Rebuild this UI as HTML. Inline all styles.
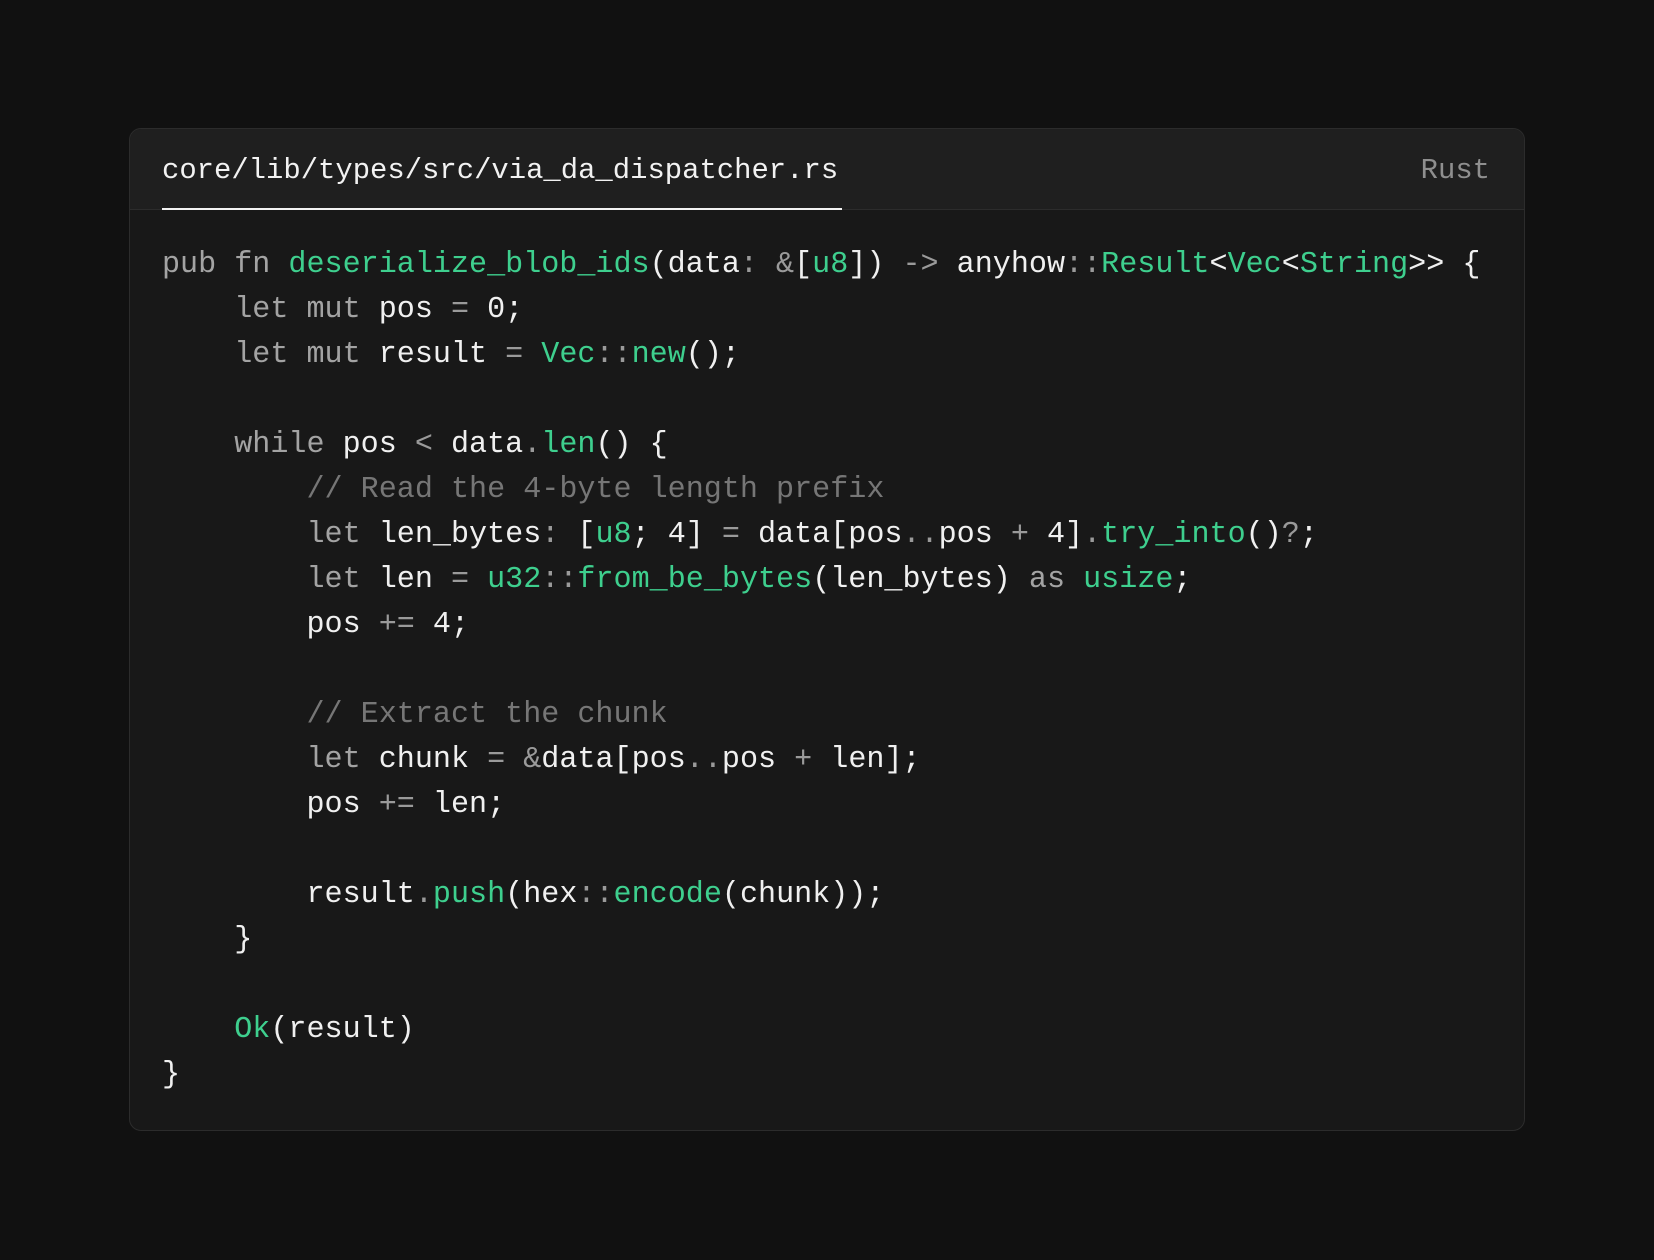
<!DOCTYPE html>
<html><head><meta charset="utf-8"><style>
html,body{margin:0;padding:0;background:#111111;width:1654px;height:1260px;overflow:hidden}
.card{position:absolute;left:129px;top:128px;width:1394px;height:1001px;background:#181818;border:1px solid #2c2c2c;border-radius:12px;overflow:hidden}
.hdr{height:80px;background:#1f1f1f;border-bottom:1px solid #2c2c2c;position:relative;font-family:"Liberation Mono",monospace;font-size:28.9px}
.title{position:absolute;left:32px;top:22px;color:#f2f2f2;line-height:40px;padding-bottom:0}
.ul{position:absolute;left:32px;width:680px;bottom:-1px;height:2px;background:#f2f2f2}
.lang{position:absolute;right:34px;top:22px;line-height:40px;color:#8f8f8f}
pre{margin:0;position:absolute;left:32px;top:114px;font-family:"Liberation Mono",monospace;font-size:30.1px;line-height:45px;color:#f0f0f0}
.k{color:#a3a3a3}.g{color:#3ecf8e}.p{color:#9a9a9a}.c{color:#767676}
</style></head><body>
<div class="card">
<div class="hdr"><span class="title">core/lib/types/src/via_da_dispatcher.rs</span><div class="ul"></div><span class="lang">Rust</span></div>
<pre><span class="k">pub fn</span> <span class="g">deserialize_blob_ids</span>(data<span class="p">:</span> <span class="p">&amp;</span>[<span class="g">u8</span>]) <span class="p">-&gt;</span> anyhow<span class="p">::</span><span class="g">Result</span>&lt;<span class="g">Vec</span>&lt;<span class="g">String</span>&gt;&gt; {
    <span class="k">let mut</span> pos <span class="p">=</span> 0;
    <span class="k">let mut</span> result <span class="p">=</span> <span class="g">Vec</span><span class="p">::</span><span class="g">new</span>();

    <span class="k">while</span> pos <span class="p">&lt;</span> data<span class="p">.</span><span class="g">len</span>() {
        <span class="c">// Read the 4-byte length prefix</span>
        <span class="k">let</span> len_bytes<span class="p">:</span> [<span class="g">u8</span>; 4] <span class="p">=</span> data[pos<span class="p">..</span>pos <span class="p">+</span> 4]<span class="p">.</span><span class="g">try_into</span>()<span class="p">?</span>;
        <span class="k">let</span> len <span class="p">=</span> <span class="g">u32</span><span class="p">::</span><span class="g">from_be_bytes</span>(len_bytes) <span class="k">as</span> <span class="g">usize</span>;
        pos <span class="p">+=</span> 4;

        <span class="c">// Extract the chunk</span>
        <span class="k">let</span> chunk <span class="p">=</span> <span class="p">&amp;</span>data[pos<span class="p">..</span>pos <span class="p">+</span> len];
        pos <span class="p">+=</span> len;

        result<span class="p">.</span><span class="g">push</span>(hex<span class="p">::</span><span class="g">encode</span>(chunk));
    }

    <span class="g">Ok</span>(result)
}</pre>
</div>
</body></html>
